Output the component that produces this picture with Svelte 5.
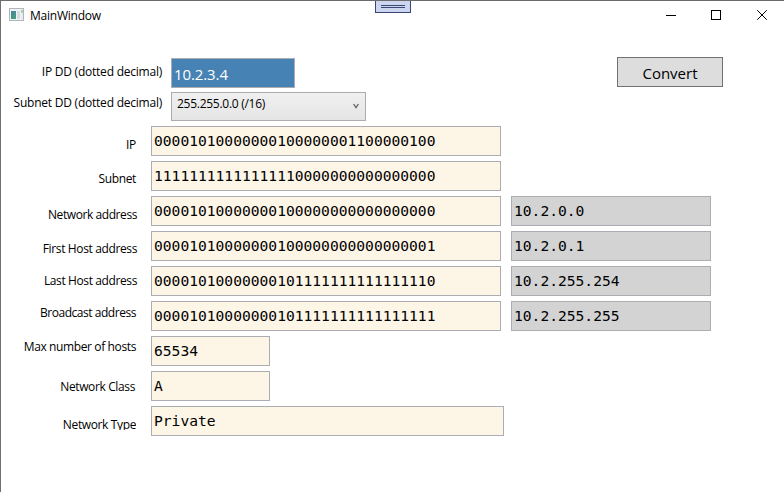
<script>
  const rows = [
    { label: 'IP', top: 11, right: 136, ls: -0.3, value: '00001010000000100000001100000100', width: 350 },
    { label: 'Subnet', top: 10, right: 136, ls: -0.35, value: '11111111111111110000000000000000', width: 350 },
    { label: 'Network address', top: 11, right: 137, ls: -0.42, value: '00001010000000100000000000000000', width: 350, dotted: '10.2.0.0' },
    { label: 'First Host address', top: 10, right: 137, ls: -0.37, value: '00001010000000100000000000000001', width: 350, dotted: '10.2.0.1' },
    { label: 'Last Host address', top: 7, right: 137, ls: -0.39, value: '00001010000000101111111111111110', width: 350, dotted: '10.2.255.254' },
    { label: 'Broadcast address', top: 4, right: 136, ls: -0.46, value: '00001010000000101111111111111111', width: 350, dotted: '10.2.255.255' },
    { label: 'Max number of hosts', top: 3, right: 136, ls: -0.38, value: '65534', width: 119 },
    { label: 'Network Class', top: 8, right: 135, ls: -0.37, value: 'A', width: 119 },
    { label: 'Network Type', top: 11, right: 136, ls: -0.37, value: 'Private', width: 353, clip: true },
  ];
</script>

<div class="window">
  <div class="grip"><i></i><i></i></div>
  <header>
    <svg class="app-icon" width="16" height="14" viewBox="0 0 16 14">
      <defs>
        <linearGradient id="pane" x1="0" y1="0" x2="1" y2="1">
          <stop offset="0" stop-color="#4a7fae" />
          <stop offset="1" stop-color="#46a56c" />
        </linearGradient>
      </defs>
      <rect x=".5" y=".5" width="14" height="12" fill="#f0f2f4" stroke="#b0b5ba" />
      <rect x="2" y="3" width="5" height="8" fill="url(#pane)" />
      <rect x="8" y="3" width="3" height="8" fill="#d5dce2" />
      <rect x="12" y="2" width="2" height="3" fill="#a9cdc0" />
      <rect x="12" y="6" width="2" height="5" fill="#e6ebef" />
    </svg>
    <span class="title">MainWindow</span>
    <svg class="controls" width="120" height="30" viewBox="0 0 120 30" fill="none" stroke="#000">
      <path d="M2 14.5h10" />
      <rect x="47.5" y="9.5" width="9" height="9" />
      <path d="M93.2 9.2l9.6 9.6M102.8 9.2l-9.6 9.6" />
    </svg>
  </header>

  <main>
    <div class="row first">
      <span class="label dd">IP DD (dotted decimal)</span>
      <div class="input">10.2.3.4</div>
      <button>Convert</button>
    </div>
    <div class="row second">
      <span class="label dd">Subnet DD (dotted decimal)</span>
      <div class="combo">
        <span>255.255.0.0 (/16)</span>
        <svg width="6" height="6" viewBox="0 0 6 6" fill="none" stroke="#606060" stroke-width="1.3"><path d="M.6 1L3 4.6 5.4 1" /></svg>
      </div>
    </div>
    <div class="results">
      {#each rows as r}
        <div class="row">
          <span class="label" class:clip={r.clip} style:width="{r.right - 1}px" style:margin-right="{151 - r.right}px" style:margin-top="{r.top}px" style:letter-spacing="{r.ls}px">{r.label}</span>
          <div class="box" style:width="{r.width}px">{r.value}</div>
          {#if r.dotted}<div class="box dotted">{r.dotted}</div>{/if}
        </div>
      {/each}
    </div>
  </main>
</div>

<style>
  :global(body) { margin: 0; background: #fff; }
  .window {
    position: relative;
    box-sizing: border-box;
    width: 784px;
    height: 492px;
    border-top: 1px solid #6b6b6d;
    border-left: 1px solid #6f6f72;
    background: #fff;
    color: #000;
    font: 12px/16px "Open Sans", "Noto Sans", sans-serif;
    overflow: hidden;
  }
  .grip {
    position: absolute;
    left: 374px;
    top: -1px;
    width: 36px;
    height: 13px;
    box-sizing: border-box;
    border: 1px solid #3b4674;
    background: #ccd5f0;
    display: flex;
    flex-direction: column;
    align-items: center;
    gap: 1px;
    padding-top: 4px;
  }
  .grip i { width: 24px; height: 1px; background: #3b4674; }
  header { display: flex; align-items: flex-start; height: 57px; }
  .app-icon { margin: 7px 0 0 8px; }
  .title { margin: 7px 0 0 5px; font-size: 12px; letter-spacing: -0.24px; }
  .controls { margin-left: auto; }
  .row { display: flex; align-items: flex-start; height: 35px; }
  .label { flex: none; height: 16px; text-align: right; white-space: nowrap; }
  .clip { height: 13px; overflow: hidden; }
  .dd { width: 161px; margin-right: 9px; letter-spacing: -0.23px; }
  .first { height: 34px; }
  .first .label { margin-top: 6px; }
  .second { height: 34px; }
  .second .label { margin-top: 3px; }
  .input {
    box-sizing: border-box;
    width: 124px;
    height: 30px;
    border: 1px solid #abadb3;
    background: #4682b4;
    color: #fff;
    font-size: 15px;
    line-height: 31px;
    padding-left: 2px;
    letter-spacing: -0.1px;
  }
  button {
    box-sizing: border-box;
    width: 106px;
    height: 30px;
    margin: -1px 0 0 322px;
    padding: 0;
    border: 1px solid #707070;
    background: #ddd;
    color: #000;
    font: 15px/30px "Open Sans", "Noto Sans", sans-serif;
  }
  .combo {
    box-sizing: border-box;
    display: flex;
    justify-content: space-between;
    width: 195px;
    height: 29px;
    border: 1px solid #acacac;
    background: linear-gradient(#f0f0f0, #e5e5e5);
    padding: 3px 6px 0 5px;
    letter-spacing: -0.27px;
  }
  .combo svg { margin-top: 7px; }
  .box {
    box-sizing: border-box;
    flex: none;
    height: 30px;
    border: 1px solid #abadb3;
    background: #fdf5e6;
    padding-left: 2px;
    font: 14.61px/28px "DejaVu Sans Mono", "Liberation Mono", monospace;
    white-space: nowrap;
  }
  .dotted { width: 200px; margin-left: 10px; background: #d3d3d3; }
</style>
